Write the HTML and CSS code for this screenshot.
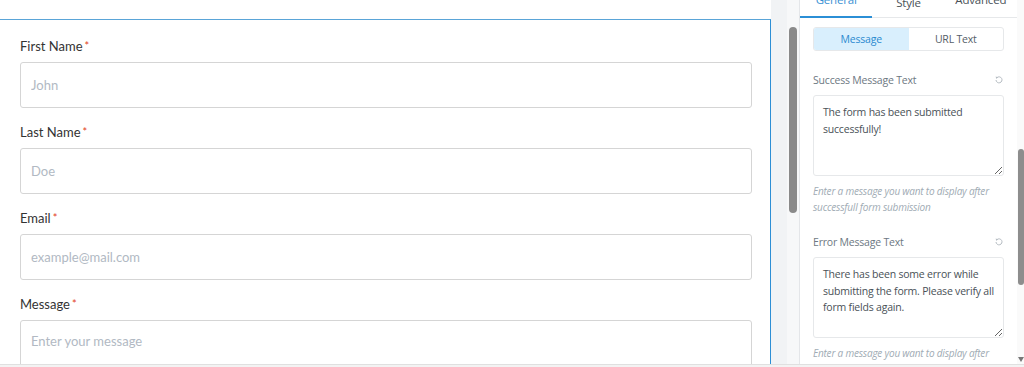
FILE: index.html
```html
<!doctype html>
<html lang="en">
<head>
  <meta charset="utf-8">
  <title>Form editor</title>
  <link rel="stylesheet" href="styles.css">
</head>
<body>
  <div class="screen">
    <div class="workspace">
      <main class="preview">
        <form class="form-box">
          <div class="field">
            <label class="field-label">First Name<span class="req">*</span></label>
            <input class="field-input" type="text" placeholder="John">
          </div>
          <div class="field">
            <label class="field-label">Last Name<span class="req">*</span></label>
            <input class="field-input" type="text" placeholder="Doe">
          </div>
          <div class="field">
            <label class="field-label">Email<span class="req">*</span></label>
            <input class="field-input" type="email" placeholder="example@mail.com">
          </div>
          <div class="field">
            <label class="field-label">Message<span class="req">*</span></label>
            <textarea class="field-input field-textarea" placeholder="Enter your message"></textarea>
          </div>
        </form>
      </main>

      <div class="gutter"></div>
      <div class="preview-scroll"><div class="preview-thumb"></div></div>

      <aside class="panel">
        <div class="tabs">
          <div class="tab is-active"><span>General</span></div>
          <div class="tab is-hover"><span>Style</span></div>
          <div class="tab"><span>Advanced</span></div>
        </div>

        <div class="panel-body">
          <div class="switch">
            <div class="switch-item is-active">Message</div>
            <div class="switch-item">URL Text</div>
          </div>

          <div class="control">
            <div class="control-head">
              <span>Success Message Text</span>
              <svg class="reset" width="8" height="8" viewBox="0 0 8 8">
                <path d="M2 1.6 A3 3 0 1 1 1 4" fill="none" stroke="currentColor" stroke-width="1"/>
                <path d="M0.6 0.6 L2.9 1.2 L1.4 3 Z" fill="currentColor"/>
              </svg>
            </div>
            <textarea class="control-textarea" readonly>The form has been submitted successfully!</textarea>
            <p class="control-help">Enter a message you want to display after successfull form submission</p>
          </div>

          <div class="control">
            <div class="control-head">
              <span>Error Message Text</span>
              <svg class="reset" width="8" height="8" viewBox="0 0 8 8">
                <path d="M2 1.6 A3 3 0 1 1 1 4" fill="none" stroke="currentColor" stroke-width="1"/>
                <path d="M0.6 0.6 L2.9 1.2 L1.4 3 Z" fill="currentColor"/>
              </svg>
            </div>
            <textarea class="control-textarea" readonly>There has been some error while submitting the form. Please verify all form fields again.</textarea>
            <p class="control-help">Enter a message you want to display after unsuccessfull form submission</p>
          </div>
        </div>
      </aside>

      <div class="panel-scroll">
        <div class="panel-thumb"></div>
        <span class="panel-arrow"></span>
      </div>
    </div>
    <div class="hbar"></div>
  </div>
</body>
</html>
```

FILE: styles.css
```css
body {
  margin: 0;
  background: #fff;
  font-family: Lato, sans-serif;
}

.screen {
  width: 1024px;
  height: 367px;
  display: flex;
  flex-direction: column;
  overflow: hidden;
}

.workspace {
  display: flex;
  height: 364px;
}

/* preview */
.preview {
  width: 771px;
  flex-shrink: 0;
  overflow: hidden;
  padding-top: 19px;
  box-sizing: border-box;
  background: #fff;
}

.form-box {
  margin: 0 0 0 -1px;
  width: 772px;
  box-sizing: border-box;
  border: 1px solid #2d8fd5;
  border-top-color: #5aa5d8;
  padding: 16px 18px 0 20px;
}

.field {
  margin-bottom: 14px;
}

.field-label {
  display: block;
  font-size: 13px;
  line-height: 20px;
  color: #333;
  margin-bottom: 6px;
}

.req {
  color: #e2401c;
  font-size: 11px;
  vertical-align: top;
  margin-left: 2px;
}

.field-input {
  display: block;
  width: 100%;
  height: 46px;
  box-sizing: border-box;
  border: 1px solid #d5d5d5;
  border-radius: 3px;
  padding: 0 10px;
  font: 13px Lato, sans-serif;
  color: #333;
  background: #fff;
}

.field-input::placeholder {
  color: #b1b9c3;
}

.field-textarea {
  height: 120px;
  padding-top: 10px;
  line-height: 20px;
  resize: none;
}

.gutter {
  width: 16px;
  flex-shrink: 0;
  background: #f1f3f5;
}

.preview-scroll {
  width: 12px;
  flex-shrink: 0;
  box-sizing: border-box;
  padding: 27px 2px 0;
  background: #f7f8f9;
}

.preview-thumb {
  height: 186px;
  border-radius: 4px;
  background: #8a8a8a;
}

/* panel */
.panel {
  width: 218px;
  flex-shrink: 0;
  box-sizing: border-box;
  border-left: 1px solid #e4e6e9;
  background: #fff;
  font-family: "Open Sans", sans-serif;
  letter-spacing: -0.2px;
}

.tabs {
  display: flex;
  height: 17px;
  border-bottom: 1px solid #e6e8ea;
}

.tab {
  flex: 1;
  height: 18px;
  box-sizing: border-box;
  margin-bottom: -1px;
  text-align: center;
  font-size: 11.5px;
  line-height: 14px;
  color: #495157;
  overflow: hidden;
}

.tab span {
  display: block;
  margin-top: -7px;
}

.tab.is-hover span {
  margin-top: -4px;
}

.tab.is-active {
  color: #3a91d4;
  border-bottom: 2px solid #2b8fd6;
}

.panel-body {
  padding: 9px 13px 0;
}

.switch {
  display: flex;
  height: 24px;
  box-sizing: border-box;
  border: 1px solid #e6e8ea;
  border-radius: 3px;
  overflow: hidden;
  font-size: 10.5px;
}

.switch-item {
  flex: 1;
  display: flex;
  align-items: center;
  justify-content: center;
  color: #556068;
}

.switch-item.is-active {
  background: #d9effd;
  color: #2b8ad0;
}

.control {
  margin-top: 19px;
}

.switch + .control {
  margin-top: 21px;
}

.control-head {
  display: flex;
  justify-content: space-between;
  align-items: center;
  height: 16px;
  margin-bottom: 7px;
  font-size: 10.5px;
  color: #6d7882;
}

.reset {
  color: #b5bcc2;
  margin-right: 1px;
}

.control-textarea {
  display: block;
  width: 100%;
  height: 81px;
  box-sizing: border-box;
  border: 1px solid #e6e8ea;
  border-radius: 3px;
  padding: 8px 9px;
  font: 10.5px/16.5px "Open Sans", sans-serif;
  letter-spacing: -0.2px;
  color: #495157;
  resize: vertical;
  outline: none;
}

.control-help {
  margin: 7px 0 0;
  font-size: 10px;
  font-style: italic;
  line-height: 16px;
  color: #a0abb4;
}

.panel-scroll {
  width: 7px;
  flex-shrink: 0;
  display: flex;
  flex-direction: column;
  align-items: flex-end;
  background: #fafafa;
}

.panel-thumb {
  margin-top: 149px;
  width: 6px;
  height: 136px;
  border-radius: 3px;
  background: #8d8d8d;
}

.panel-arrow {
  margin-top: auto;
  margin-bottom: 2px;
  width: 0;
  border-left: 3px solid transparent;
  border-right: 3px solid transparent;
  border-top: 5px solid #777;
}

.hbar {
  height: 3px;
  box-sizing: border-box;
  border-top: 1px solid #e0e0e0;
  background: #f3f3f3;
}
```
